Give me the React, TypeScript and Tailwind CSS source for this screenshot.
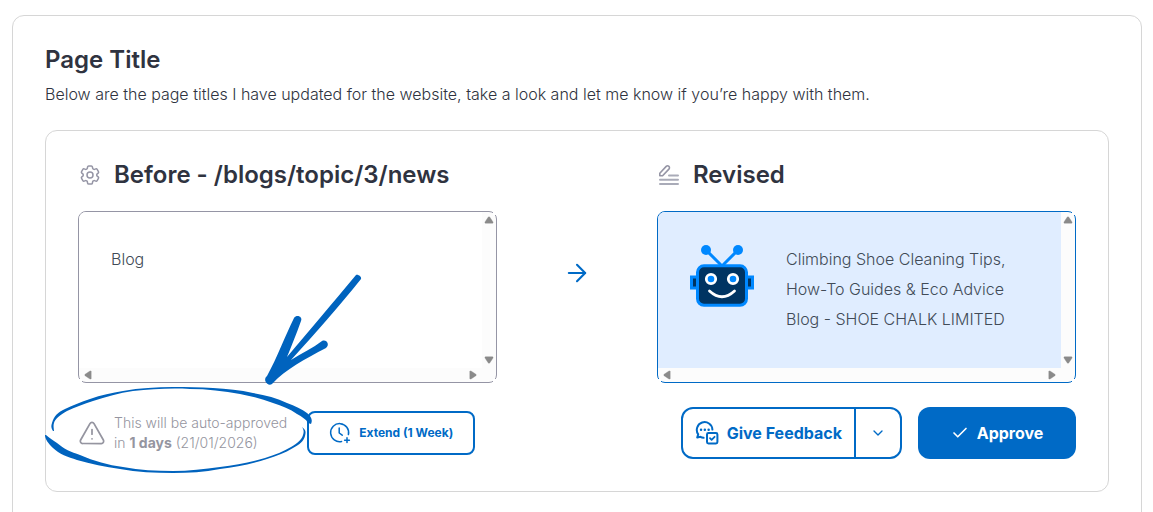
import type { ReactNode } from "react"
import { ArrowRight, Check, ChevronDown, TriangleAlert } from "lucide-react"
import { HiOutlineCog6Tooth } from "react-icons/hi2"

function PencilLinesIcon() {
  return (
    <svg width="24" height="24" viewBox="0 0 24 24" fill="none" stroke="currentColor" strokeLinecap="round" strokeLinejoin="round" className="shrink-0">
      <path d="M2.8 12.8V10.2L9.2 3.4a1.9 1.9 0 0 1 2.7 2.7L5.6 12.8Z" strokeWidth="1.6" />
      <path d="M12 12.5H21M3 16.8H21M3 21H21" stroke="#a9abb8" strokeWidth="2" />
    </svg>
  )
}

function ClockPlusIcon() {
  return (
    <svg width="22" height="22" viewBox="0 0 22 22" fill="none" stroke="currentColor" strokeWidth="1.5" strokeLinecap="round" strokeLinejoin="round">
      <path d="M19.4 12.6A9 9 0 1 0 12.6 19.4" />
      <path d="M10.2 6V11L13.2 13.2" />
      <path d="M18 15.8V20.6M15.6 18.2H20.4" />
    </svg>
  )
}

function FeedbackIcon() {
  return (
    <svg width="24" height="24" viewBox="0 0 24 24" fill="none" stroke="currentColor" strokeWidth="2" strokeLinecap="round" strokeLinejoin="round">
      <path d="M8.6 16.8C7.4 16.7 6.4 16.4 5.4 15.8L2.2 16.6L3.2 13.4A7.8 7.8 0 1 1 17.4 8.6" />
      <path d="M6 8.8H6.1M9.8 8.8H9.9M13.6 8.8H13.7" strokeWidth="2.4" />
      <rect x="12" y="12" width="10.4" height="10.4" rx="1.4" />
      <path d="M15 17.2L16.6 18.8L19.6 15.8" strokeWidth="1.8" />
    </svg>
  )
}

function Robot() {
  return (
    <svg width="64" height="64" viewBox="0 -1 64 64" fill="none" className="shrink-0">
      <path d="M16 5L32 21L48 5" stroke="#0088ff" strokeWidth="3" />
      <circle cx="16" cy="5" r="5" fill="#0088ff" />
      <circle cx="48" cy="5" r="5" fill="#0088ff" />
      <rect x="1.5" y="32" width="8" height="11" fill="#003462" stroke="#0088ff" strokeWidth="3" />
      <rect x="54.5" y="32" width="8" height="11" fill="#003462" stroke="#0088ff" strokeWidth="3" />
      <rect x="7.5" y="20.8" width="49" height="39.5" rx="6.5" fill="#003462" stroke="#0088ff" strokeWidth="3" />
      <circle cx="21" cy="34" r="4.7" fill="#0088ff" stroke="#fff" strokeWidth="2.8" />
      <circle cx="43" cy="34" r="4.7" fill="#0088ff" stroke="#fff" strokeWidth="2.8" />
      <path d="M19.5 46Q32 57.5 44.5 46" stroke="#fff" strokeWidth="2.8" strokeLinecap="round" />
    </svg>
  )
}

function ScrollArrow({ className = "" }: { className?: string }) {
  return (
    <svg width="10" height="8" viewBox="0 0 10 8" className={className}>
      <path d="M4.3 1.1Q5 0.3 5.7 1.1L9 6Q9.4 7.2 8.4 7.2H1.6Q0.6 7.2 1 6Z" fill="#8a8a8a" stroke="#8a8a8a" strokeWidth="0.4" />
    </svg>
  )
}

// fixed-height pane with always-visible scrollbars on the right and bottom;
// the track ends cut the border at three corners
function ScrollPane({ className, bodyClassName = "", children }: { className: string; bodyClassName?: string; children: ReactNode }) {
  return (
    <div className={`relative grid h-43 grid-cols-[1fr_14px] grid-rows-[1fr_14px] rounded-lg border bg-[#fcfcfc] ${className}`}>
      <div className={`flex items-start gap-8 rounded-tl-[7px] p-8 ${bodyClassName}`}>{children}</div>
      <div className="flex flex-col items-center justify-between py-1">
        <ScrollArrow />
        <ScrollArrow className="rotate-180" />
      </div>
      <div className="flex items-center justify-between px-1">
        <ScrollArrow className="-rotate-90" />
        <ScrollArrow className="rotate-90" />
      </div>
      <span className="absolute -top-px -right-px size-1 bg-white" />
      <span className="absolute -right-px -bottom-px size-1 bg-white" />
      <span className="absolute -bottom-px -left-px size-1 bg-white" />
    </div>
  )
}

function PaneHeading({ icon, children }: { icon: ReactNode; children: ReactNode }) {
  return (
    <div className="mb-5 flex items-center gap-3 text-[#9595a5]">
      {icon}
      <h3 className="text-2xl font-semibold text-[#2f3340]">{children}</h3>
    </div>
  )
}

// hand-drawn ring around the notice plus an arrow pointing at it
function Annotation() {
  return (
    <svg width="324" height="206" viewBox="0 0 324 206" fill="#0063be" className="pointer-events-none absolute top-[139px] -left-1.5" aria-hidden="true">
      <path d="M316 5C318 4 322 7 321 9C300 35 275 64 251 90C262 83 273 78 282 71C287 69 290 75 286 78C265 89 246 99 232 114C228 117 222 110 227 106C237 88 245 66 254 48C257 44 263 47 261 51C256 65 251 77 247 87C268 62 292 34 316 5Z" />
      <path d="M13 161C11 158 11 156 12 153C14 146 18 142 25 139C33 135 41 132 50 129C61 125 72 123 83 121C100 118 116 117 133 117C147 117 160 117 173 118C187 119 200 120 213 123C225 125 237 128 247 133C255 136 262 139 267 143C271 146 273 150 271 154L268 153C266 149 262 147 257 144C250 139 242 136 233 133C222 129 211 126 200 124C184 121 167 119 150 119C131 118 112 119 93 121C79 123 66 127 53 131C44 134 35 137 27 141C20 145 15 149 14 153C13 156 14 159 14 161Z" />
      <path d="M6 165C9 168 13 170 17 173C24 179 31 182 40 185C54 191 68 195 83 197C100 200 116 201 133 201C149 201 164 199 180 197C196 195 211 192 225 188C235 185 244 181 251 177C258 173 262 169 263 165C264 162 264 160 262 157C266 160 266 162 265 166C264 171 259 175 253 178C245 183 236 186 227 189C212 194 196 197 180 199C164 202 149 203 133 203C115 203 97 202 80 199C65 197 51 194 37 190C28 187 19 184 13 178C8 173 5 169 5 165Z" />
    </svg>
  )
}

export default function App() {
  return (
    <main className="h-screen overflow-hidden bg-white pt-[15px] pr-[11px] pl-3 font-['Inter',sans-serif] text-[#2f3340]">
      <section className="rounded-xl border border-[#d6d6d6] px-8 pt-7 pb-12">
        <h2 className="text-2xl font-semibold">Page Title</h2>
        <p className="mt-1.5 font-light">
          Below are the page titles I have updated for the website, take a look and let me know if you’re happy with them.
        </p>

        <article className="relative mt-6 rounded-xl border border-[#d6d6d6] px-8 pt-7 pb-8">
          <div className="grid grid-cols-[1fr_160px_1fr] items-center">
            <div>
              <PaneHeading icon={<HiOutlineCog6Tooth className="size-6 shrink-0" />}>Before - /blogs/topic/3/news</PaneHeading>
              <ScrollPane className="border-[#9595a5]" bodyClassName="bg-white">
                <p className="leading-[30px] font-light text-[#414b57]">Blog</p>
              </ScrollPane>
            </div>
            <div className="flex justify-center pt-1 text-[#006ac6]">
              <ArrowRight className="size-7" strokeWidth={1.8} />
            </div>
            <div>
              <PaneHeading icon={<PencilLinesIcon />}>Revised</PaneHeading>
              <ScrollPane className="border-[#006ac6]" bodyClassName="bg-[#e0edff]">
                <Robot />
                <p className="leading-[30px] font-light text-[#414b57]">
                  Climbing Shoe Cleaning Tips, How-To Guides &amp; Eco Advice Blog - SHOE CHALK LIMITED
                </p>
              </ScrollPane>
            </div>
          </div>

          <div className="mt-6 flex items-center justify-between">
            <div className="flex items-center gap-5">
              <div className="flex items-center gap-2 text-[#9595a0]">
                <TriangleAlert className="size-7 shrink-0" strokeWidth={1.5} />
                <p className="text-sm font-light">
                  This will be auto-approved
                  <br />
                  in <strong className="font-bold">1 days</strong> (21/01/2026)
                </p>
              </div>
              <button type="button" className="flex h-11 items-center gap-2 rounded-lg border-2 border-[#006ac6] px-5 text-xs font-bold text-[#006ac6]">
                <ClockPlusIcon />
                Extend (1 Week)
              </button>
            </div>

            <div className="flex gap-4">
              <div className="flex h-13 divide-x-2 divide-[#006ac6] rounded-xl border-2 border-[#006ac6] font-bold text-[#006ac6]">
                <button type="button" className="flex items-center gap-2 px-3">
                  <FeedbackIcon />
                  Give Feedback
                </button>
                <button type="button" aria-label="More options" className="px-3.5">
                  <ChevronDown className="size-4" strokeWidth={2} />
                </button>
              </div>
              <button type="button" className="flex h-13 w-[158px] items-center justify-center gap-2 rounded-xl bg-[#006ac6] font-bold text-white">
                <Check className="size-4.5" strokeWidth={2.2} />
                Approve
              </button>
            </div>
          </div>
          <Annotation />
        </article>
      </section>
    </main>
  )
}
